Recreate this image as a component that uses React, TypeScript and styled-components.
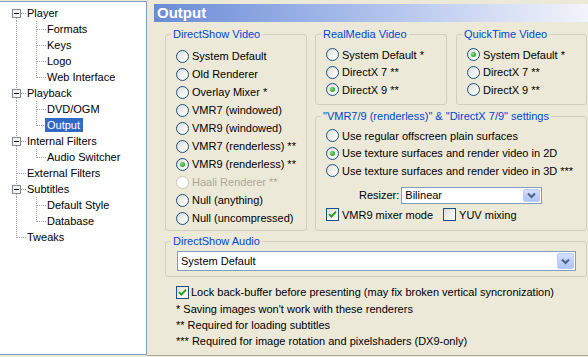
import React from 'react';
import styled, { createGlobalStyle } from 'styled-components';

type TreeNode = { label: string; children?: TreeNode[]; selected?: boolean };

const tree: TreeNode[] = [
  { label: 'Player', children: [{ label: 'Formats' }, { label: 'Keys' }, { label: 'Logo' }, { label: 'Web Interface' }] },
  { label: 'Playback', children: [{ label: 'DVD/OGM' }, { label: 'Output', selected: true }] },
  { label: 'Internal Filters', children: [{ label: 'Audio Switcher' }] },
  { label: 'External Filters' },
  { label: 'Subtitles', children: [{ label: 'Default Style' }, { label: 'Database' }] },
  { label: 'Tweaks' },
];

type FlatRow = {
  label: string;
  depth: number;
  ancestors: boolean[];
  first: boolean;
  hasNext: boolean;
  hasChildren: boolean;
  selected?: boolean;
};

const flatten = (nodes: TreeNode[], depth: number, ancestors: boolean[]): FlatRow[] =>
  nodes.flatMap((n, i) => {
    const hasNext = i < nodes.length - 1;
    const row: FlatRow = {
      label: n.label,
      depth,
      ancestors,
      first: depth === 0 && i === 0,
      hasNext,
      hasChildren: !!n.children,
      selected: n.selected,
    };
    return [row, ...(n.children ? flatten(n.children, depth + 1, [...ancestors, hasNext]) : [])];
  });

const directShow = [
  { label: 'System Default' },
  { label: 'Old Renderer' },
  { label: 'Overlay Mixer *' },
  { label: 'VMR7 (windowed)' },
  { label: 'VMR9 (windowed)' },
  { label: 'VMR7 (renderless) **' },
  { label: 'VMR9 (renderless) **', checked: true },
  { label: 'Haali Renderer **', disabled: true },
  { label: 'Null (anything)' },
  { label: 'Null (uncompressed)' },
];

const GlobalStyle = createGlobalStyle`
  html, body {
    margin: 0;
    padding: 0;
    background: #ece9d8;
    overflow: hidden;
  }
  body {
    font-family: "Liberation Sans", Arial, sans-serif;
    font-size: 11px;
    color: #000;
  }
  * {
    box-sizing: border-box;
  }
`;

const Window = styled.div`
  display: flex;
  width: 588px;
  height: 357px;
  overflow: hidden;
`;

const TreePanel = styled.div`
  width: 147px;
  height: 354px;
  margin-top: 1px;
  padding-top: 3px;
  background: #fff;
  border: 1px solid #7f9db9;
  border-left: none;
  flex-shrink: 0;
`;

const TreeRow = styled.div`
  display: flex;
  align-items: center;
  height: 16px;
  white-space: nowrap;
`;

const GuideSvg = styled.svg`
  display: block;
  flex-shrink: 0;
  &:first-child {
    margin-left: 6px;
  }
`;

const TreeLabel = styled.span<{ $selected?: boolean }>`
  height: 14px;
  line-height: 14px;
  margin-left: -1px;
  padding: 0 3px 0 2px;
  background: ${(p) => (p.$selected ? '#316ac5' : 'transparent')};
  color: ${(p) => (p.$selected ? '#fff' : '#000')};
`;

const RightPane = styled.div`
  flex: 1;
  display: flex;
  flex-direction: column;
  height: 356px;
  padding-top: 4px;
  border-bottom: 1px solid #aca899;
  min-width: 0;
`;

const TitleBar = styled.div`
  margin-left: 7px;
  height: 18px;
  line-height: 18px;
  padding-left: 3px;
  background: linear-gradient(to right, #6a8bd6 0%, #a6bbea 45%, #f3f4fb 100%);
  color: #fff;
  font-weight: bold;
  font-size: 15px;
`;

const Content = styled.div`
  display: flex;
  flex-direction: column;
  margin-left: 18px;
  width: 422px;
`;

const TopRow = styled.div`
  display: flex;
  gap: 8px;
  margin-top: 6px;
`;

const Column = styled.div`
  display: flex;
  flex-direction: column;
  width: 272px;
`;

const PairRow = styled.div`
  display: flex;
  gap: 9px;
`;

const GroupBox = styled.fieldset<{ $width?: number; $mt?: number }>`
  margin: ${(p) => p.$mt ?? 0}px 0 0 0;
  padding: 0;
  min-width: 0;
  width: ${(p) => (p.$width ? `${p.$width}px` : 'auto')};
  border: 1px solid #d0d0bf;
  border-radius: 3px;
`;

const Legend = styled.legend`
  margin-left: 5px;
  padding: 0 2px;
  line-height: 13px;
  font-size: 11px;
  color: #0046d5;
  white-space: nowrap;
`;

const GroupBody = styled.div<{ $pad: string }>`
  display: flex;
  flex-direction: column;
  padding: ${(p) => p.$pad};
`;

const OptionRow = styled.label<{ $h: number; $disabled?: boolean; $gap?: number }>`
  display: flex;
  align-items: center;
  gap: ${(p) => p.$gap ?? 3}px;
  height: ${(p) => p.$h}px;
  white-space: nowrap;
  color: ${(p) => (p.$disabled ? '#aca899' : '#000')};
`;

const RadioDot = styled.span<{ $checked?: boolean; $disabled?: boolean }>`
  display: inline-flex;
  align-items: center;
  justify-content: center;
  width: 13px;
  height: 13px;
  flex-shrink: 0;
  border-radius: 50%;
  border: 1px solid ${(p) => (p.$disabled ? '#cac8bb' : '#1c5180')};
  background: ${(p) =>
    p.$disabled ? '#fff' : 'linear-gradient(135deg, #dcdbd5 0%, #f4f4f0 60%, #ffffff 100%)'};
  &::after {
    content: '';
    display: ${(p) => (p.$checked ? 'block' : 'none')};
    width: 5px;
    height: 5px;
    border-radius: 50%;
    background: radial-gradient(circle at 40% 40%, #8fe08f 0%, #2fb02f 55%, #1f8f1f 100%);
  }
`;

const CheckBox = styled.span`
  display: inline-flex;
  align-items: center;
  justify-content: center;
  width: 13px;
  height: 13px;
  flex-shrink: 0;
  border: 1px solid #1c5180;
  background: linear-gradient(135deg, #dcdbd5 0%, #f4f4f0 60%, #ffffff 100%);
`;

const ResizerRow = styled.div`
  display: flex;
  align-items: center;
  gap: 2px;
  margin-top: 7px;
  padding-left: 33px;
  height: 17px;
`;

const CheckRow = styled.div`
  display: flex;
  align-items: center;
  gap: 10px;
  margin-top: 3px;
  height: 16px;
`;

const Combo = styled.div<{ $width?: number; $height: number }>`
  display: flex;
  align-items: center;
  width: ${(p) => (p.$width ? `${p.$width}px` : 'auto')};
  height: ${(p) => p.$height}px;
  padding: 1px;
  padding-left: 3px;
  background: #fff;
  border: 1px solid #7f9db9;
`;

const ComboText = styled.span`
  flex: 1;
  white-space: nowrap;
`;

const ComboButton = styled.span`
  display: flex;
  align-items: center;
  justify-content: center;
  width: 17px;
  height: 100%;
  border: 1px solid #bccbf2;
  border-radius: 2px;
  background: linear-gradient(to bottom, #d4e0fd 0%, #bfd1fa 50%, #b0c5f6 100%);
`;

const LockRow = styled.div`
  display: flex;
  align-items: center;
  gap: 2px;
  margin-top: 7px;
  margin-left: 11px;
  height: 16px;
  white-space: nowrap;
`;

const Notes = styled.div`
  margin-top: 1px;
  margin-left: 11px;
  line-height: 16px;
  white-space: nowrap;
`;

const Guide = ({ up, down, across, box }: { up?: boolean; down?: boolean; across?: boolean; box?: boolean }) => (
  <GuideSvg width={20} height={16} viewBox="0 0 20 16" shapeRendering="crispEdges">
    <g stroke="#a0a0a0" strokeWidth={1} strokeDasharray="1 1">
      {up && <line x1={10.5} y1={0} x2={10.5} y2={box ? 4 : 9} />}
      {down && <line x1={10.5} y1={box ? 13 : 8} x2={10.5} y2={16} />}
      {across && <line x1={box ? 15 : 11} y1={8.5} x2={20} y2={8.5} />}
    </g>
    {box && (
      <g>
        <rect x={6.5} y={4.5} width={8} height={8} fill="#f3f2ec" stroke="#7b8a9c" />
        <line x1={8} y1={8.5} x2={13} y2={8.5} stroke="#000" />
      </g>
    )}
  </GuideSvg>
);

const Radio = ({ label, checked, disabled, h }: { label: string; checked?: boolean; disabled?: boolean; h: number }) => (
  <OptionRow $h={h} $disabled={disabled}>
    <RadioDot $checked={checked} $disabled={disabled} />
    {label}
  </OptionRow>
);

const Check = ({ checked }: { checked?: boolean }) => (
  <CheckBox>
    {checked && (
      <svg width={9} height={9} viewBox="0 0 9 9">
        <polyline points="1,4.2 3.4,6.6 8,1.6" fill="none" stroke="#21a121" strokeWidth={1.9} />
      </svg>
    )}
  </CheckBox>
);

const Chevron = () => (
  <svg width={9} height={7} viewBox="0 0 9 7">
    <polyline points="1,1.5 4.5,5 8,1.5" fill="none" stroke="#4d6185" strokeWidth={2} />
  </svg>
);

const App = () => {
  const rows = flatten(tree, 0, []);

  return (
    <>
      <GlobalStyle />
      <Window>
        <TreePanel>
          {rows.map((r) => (
            <TreeRow key={r.label}>
              {r.ancestors.map((next, i) => (
                <Guide key={i} up={next} down={next} />
              ))}
              <Guide
                up={!r.first}
                down={r.hasNext || (r.first && r.depth === 0)}
                across
                box={r.hasChildren}
              />
              <TreeLabel $selected={r.selected}>{r.label}</TreeLabel>
            </TreeRow>
          ))}
        </TreePanel>

        <RightPane>
          <TitleBar>Output</TitleBar>
          <Content>
            <TopRow>
              <GroupBox $width={142}>
                <Legend>DirectShow Video</Legend>
                <GroupBody $pad="6px 0 0 10px">
                  {directShow.map((o) => (
                    <Radio key={o.label} h={18} label={o.label} checked={o.checked} disabled={o.disabled} />
                  ))}
                </GroupBody>
              </GroupBox>

              <Column>
                <PairRow>
                  <GroupBox $width={132}>
                    <Legend>RealMedia Video</Legend>
                    <GroupBody $pad="5px 0 5px 10px">
                      <Radio h={17.5} label="System Default *" />
                      <Radio h={17.5} label="DirectX 7 **" />
                      <Radio h={17.5} label="DirectX 9 **" checked />
                    </GroupBody>
                  </GroupBox>
                  <GroupBox $width={131}>
                    <Legend>QuickTime Video</Legend>
                    <GroupBody $pad="5px 0 5px 10px">
                      <Radio h={17.5} label="System Default *" checked />
                      <Radio h={17.5} label="DirectX 7 **" />
                      <Radio h={17.5} label="DirectX 9 **" />
                    </GroupBody>
                  </GroupBox>
                </PairRow>

                <GroupBox $mt={5}>
                  <Legend>"VMR7/9 (renderless)" &amp; "DirectX 7/9" settings</Legend>
                  <GroupBody $pad="4.5px 0 7px 10px">
                    <Radio h={17.5} label="Use regular offscreen plain surfaces" />
                    <Radio h={17.5} label="Use texture surfaces and render video in 2D" checked />
                    <Radio h={17.5} label="Use texture surfaces and render video in 3D ***" />
                    <ResizerRow>
                      <span>Resizer:</span>
                      <Combo $width={141} $height={17}>
                        <ComboText>Bilinear</ComboText>
                        <ComboButton>
                          <Chevron />
                        </ComboButton>
                      </Combo>
                    </ResizerRow>
                    <CheckRow>
                      <OptionRow $h={16}>
                        <Check checked />
                        VMR9 mixer mode
                      </OptionRow>
                      <OptionRow $h={16}>
                        <Check />
                        YUV mixing
                      </OptionRow>
                    </CheckRow>
                  </GroupBody>
                </GroupBox>
              </Column>
            </TopRow>

            <GroupBox $mt={4}>
              <Legend>DirectShow Audio</Legend>
              <GroupBody $pad="3.5px 10px 5px 11px">
                <Combo $height={20}>
                  <ComboText>System Default</ComboText>
                  <ComboButton>
                    <Chevron />
                  </ComboButton>
                </Combo>
              </GroupBody>
            </GroupBox>

            <LockRow>
              <Check checked />
              Lock back-buffer before presenting (may fix broken vertical syncronization)
            </LockRow>
            <Notes>
              <div>* Saving images won't work with these renderers</div>
              <div>** Required for loading subtitles</div>
              <div>*** Required for image rotation and pixelshaders (DX9-only)</div>
            </Notes>
          </Content>
        </RightPane>
      </Window>
    </>
  );
};

export default App;
